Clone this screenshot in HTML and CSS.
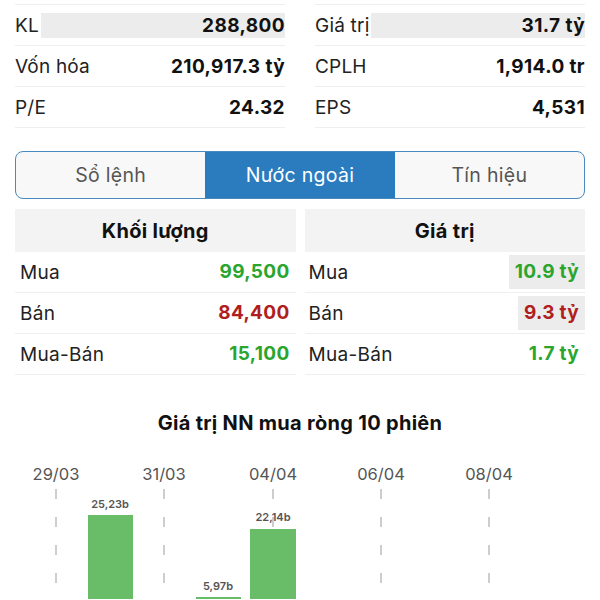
FILE: index.html
```html
<!DOCTYPE html>
<html lang="vi">
<head>
  <meta charset="UTF-8">
  <meta name="viewport" content="width=device-width, initial-scale=1.0">
  <title>Nước ngoài</title>
  <link rel="stylesheet" href="styles.css">
</head>
<body>
  <div class="page">
    <!-- Thông tin cổ phiếu -->
    <div class="stats">
      <div class="stat-col">
        <div class="stat-row"><span class="stat-label">KL</span><span class="stat-value flash">288,800</span></div>
        <div class="stat-row"><span class="stat-label">Vốn hóa</span><span class="stat-value">210,917.3 tỷ</span></div>
        <div class="stat-row"><span class="stat-label">P/E</span><span class="stat-value">24.32</span></div>
      </div>
      <div class="stat-col">
        <div class="stat-row"><span class="stat-label">Giá trị</span><span class="stat-value flash">31.7 tỷ</span></div>
        <div class="stat-row"><span class="stat-label">CPLH</span><span class="stat-value">1,914.0 tr</span></div>
        <div class="stat-row"><span class="stat-label">EPS</span><span class="stat-value">4,531</span></div>
      </div>
    </div>

    <!-- Tabs -->
    <div class="tabs">
      <div class="tab">Sổ lệnh</div>
      <div class="tab active">Nước ngoài</div>
      <div class="tab">Tín hiệu</div>
    </div>

    <!-- Giao dịch nước ngoài -->
    <div class="foreign">
      <div class="foreign-col">
        <div class="foreign-head">Khối lượng</div>
        <div class="foreign-row"><span class="foreign-label">Mua</span><span class="foreign-value up">99,500</span></div>
        <div class="foreign-row"><span class="foreign-label">Bán</span><span class="foreign-value down">84,400</span></div>
        <div class="foreign-row"><span class="foreign-label">Mua-Bán</span><span class="foreign-value up">15,100</span></div>
      </div>
      <div class="foreign-col">
        <div class="foreign-head">Giá trị</div>
        <div class="foreign-row"><span class="foreign-label">Mua</span><span class="foreign-value up flash">10.9 tỷ</span></div>
        <div class="foreign-row"><span class="foreign-label">Bán</span><span class="foreign-value down flash">9.3 tỷ</span></div>
        <div class="foreign-row"><span class="foreign-label">Mua-Bán</span><span class="foreign-value up">1.7 tỷ</span></div>
      </div>
    </div>

    <!-- Biểu đồ -->
    <h2 class="chart-title">Giá trị NN mua ròng 10 phiên</h2>
    <svg class="chart" width="600" height="150" viewBox="0 0 600 150">
      <g class="chart-dates">
        <text x="56" y="31">29/03</text>
        <text x="164" y="31">31/03</text>
        <text x="273" y="31">04/04</text>
        <text x="381" y="31">06/04</text>
        <text x="489" y="31">08/04</text>
      </g>
      <g class="chart-grid">
        <line x1="56" y1="40" x2="56" y2="150"/>
        <line x1="164" y1="40" x2="164" y2="150"/>
        <line x1="273" y1="40" x2="273" y2="150"/>
        <line x1="381" y1="40" x2="381" y2="150"/>
        <line x1="489" y1="40" x2="489" y2="150"/>
      </g>
      <g class="chart-bars">
        <rect x="88" y="66" width="45" height="84"/>
        <rect x="196" y="148" width="45" height="2"/>
        <rect x="250" y="80" width="46" height="70"/>
      </g>
      <g class="chart-values">
        <text x="110" y="59">25,23b</text>
        <text x="218" y="141">5,97b</text>
        <text x="273" y="72">22,14b</text>
      </g>
    </svg>
  </div>
</body>
</html>
```

FILE: styles.css
```css
/* Estilos gerais */
* {
  margin: 0;
  padding: 0;
  box-sizing: border-box;
}

body {
  background-color: #fff;
  font-family: Inter, "Liberation Sans", Arial, sans-serif;
  color: #222;
}

.page {
  width: 600px;
  padding: 4px 15px 0;
  overflow: hidden;
}

/* Thông tin cổ phiếu */
.stats {
  display: grid;
  grid-template-columns: 1fr 1fr;
  gap: 30px;
}

.stat-col {
  border-top: 1px solid #efefef;
}

.stat-row {
  display: flex;
  align-items: center;
  height: 41px;
  border-bottom: 1px solid #efefef;
  font-size: 19px;
}

.stat-label {
  color: #222;
  letter-spacing: 0.2px;
}

.stat-value {
  flex: 1;
  text-align: right;
  font-weight: 700;
  color: #111;
  line-height: 25px;
  letter-spacing: 0.4px;
}

.stat-value.flash {
  background-color: #ececec;
  margin-left: 2px;
}

/* Tabs */
.tabs {
  display: flex;
  margin-top: 23px;
  height: 48px;
  border: 1.5px solid #4a89bd;
  border-radius: 8px;
  overflow: hidden;
  background-color: #f8f8f8;
}

.tab {
  flex: 1;
  display: flex;
  align-items: center;
  justify-content: center;
  font-size: 19.5px;
  letter-spacing: 0.3px;
  color: #555;
}

.tab.active {
  background-color: #2a7cbf;
  color: #fff;
}

/* Giao dịch nước ngoài */
.foreign {
  display: grid;
  grid-template-columns: 1fr 1fr;
  gap: 9px;
  margin-top: 10px;
}

.foreign-head {
  height: 43px;
  display: flex;
  align-items: center;
  justify-content: center;
  background-color: #f3f3f3;
  font-size: 20px;
  font-weight: 700;
  letter-spacing: 0.3px;
  color: #111;
}

.foreign-row {
  display: flex;
  align-items: center;
  justify-content: space-between;
  height: 41px;
  border-bottom: 1px solid #efefef;
  font-size: 19px;
}

.foreign-label {
  padding-left: 5px;
  letter-spacing: 0.3px;
}

.foreign-col:last-child .foreign-label {
  padding-left: 4px;
}

.foreign-value {
  font-weight: 700;
  padding: 0 6px;
  line-height: 34px;
  letter-spacing: 0.3px;
}

.foreign-value.flash {
  background-color: #ececec;
}

.up {
  color: #2aa52e;
}

.down {
  color: #b01e1e;
}

/* Biểu đồ */
.chart-title {
  margin-top: 36px;
  text-align: center;
  font-size: 20px;
  font-weight: 700;
  line-height: 24px;
  letter-spacing: 0.3px;
  color: #111;
}

.chart {
  display: block;
  margin: 14px 0 0 -15px;
}

.chart-dates text {
  font-size: 16.5px;
  fill: #555;
  text-anchor: middle;
}

.chart-grid line {
  stroke: #bdbdbd;
  stroke-width: 1.5;
  stroke-dasharray: 10 18;
}

.chart-bars rect {
  fill: #6abd68;
}

.chart-values text {
  font-size: 11px;
  font-weight: 600;
  fill: #555;
  text-anchor: middle;
}
```
